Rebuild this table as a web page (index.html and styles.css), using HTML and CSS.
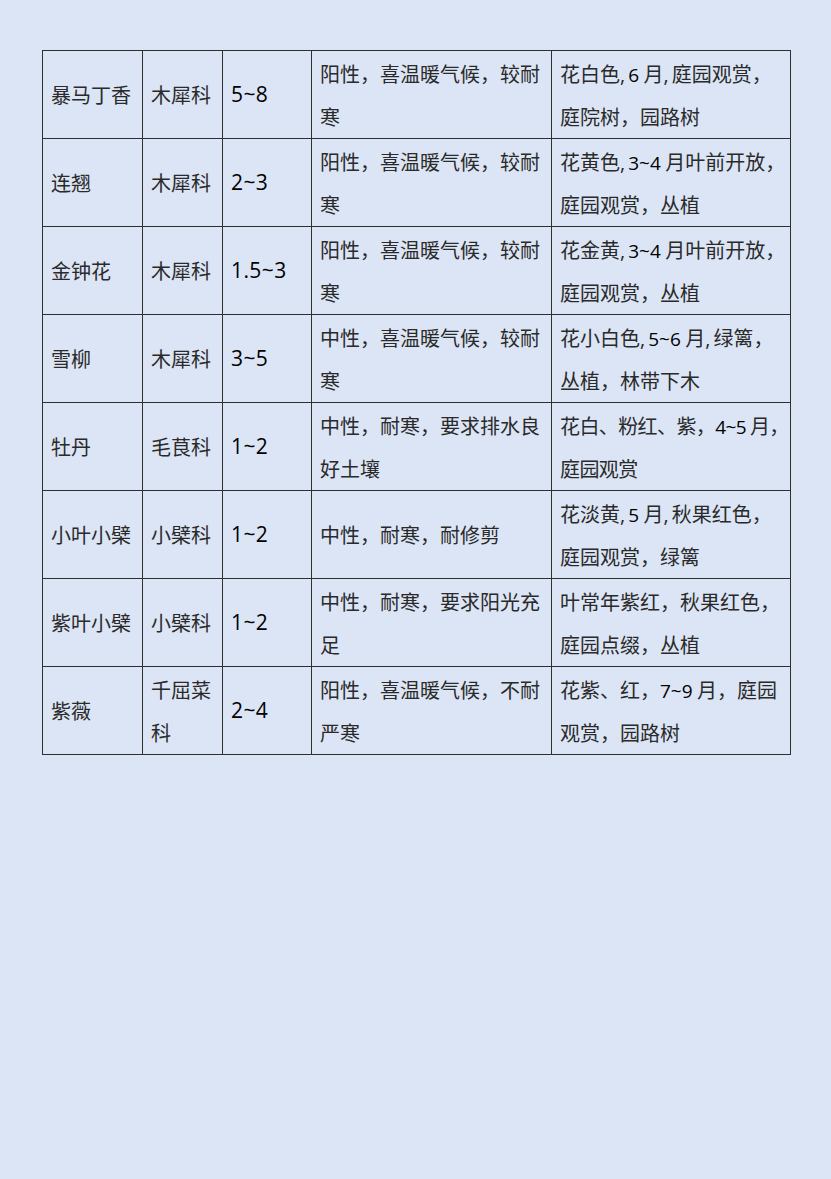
FILE: index.html
```html
<!DOCTYPE html>
<html lang="zh">
<head>
<meta charset="utf-8">
<link rel="stylesheet" href="styles.css">
</head>
<body>
<table class="plants">
  <colgroup>
    <col class="c1"><col class="c2"><col class="c3"><col class="c4"><col class="c5">
  </colgroup>
  <tr><td>暴马丁香</td><td>木犀科</td><td class="num">5~8</td><td>阳性，喜温暖气候，较耐<br>寒</td><td>花白色<span class="hc">,</span><span class="n">6</span> 月<span class="hc">,</span>庭园观赏，<br>庭院树，园路树</td></tr>
  <tr><td>连翘</td><td>木犀科</td><td class="num">2~3</td><td>阳性，喜温暖气候，较耐<br>寒</td><td>花黄色<span class="hc">,</span><span class="n">3~4</span> 月叶前开放，<br>庭园观赏，丛植</td></tr>
  <tr><td>金钟花</td><td>木犀科</td><td class="num">1.5~3</td><td>阳性，喜温暖气候，较耐<br>寒</td><td>花金黄<span class="hc">,</span><span class="n">3~4</span> 月叶前开放，<br>庭园观赏，丛植</td></tr>
  <tr><td>雪柳</td><td>木犀科</td><td class="num">3~5</td><td>中性，喜温暖气候，较耐<br>寒</td><td>花小白色<span class="hc">,</span><span class="n">5~6</span> 月<span class="hc">,</span>绿篱，<br>丛植，林带下木</td></tr>
  <tr><td>牡丹</td><td>毛茛科</td><td class="num">1~2</td><td>中性，耐寒，要求排水良<br>好土壤</td><td class="tight">花白、粉红、紫，<span class="n">4~5</span> 月，<br>庭园观赏</td></tr>
  <tr><td>小叶小檗</td><td>小檗科</td><td class="num">1~2</td><td>中性，耐寒，耐修剪</td><td>花淡黄<span class="hc">,</span><span class="n">5</span> 月<span class="hc">,</span>秋果红色，<br>庭园观赏，绿篱</td></tr>
  <tr><td>紫叶小檗</td><td>小檗科</td><td class="num">1~2</td><td>中性，耐寒，要求阳光充<br>足</td><td>叶常年紫红，秋果红色，<br>庭园点缀，丛植</td></tr>
  <tr><td>紫薇</td><td>千屈菜<br>科</td><td class="num">2~4</td><td>阳性，喜温暖气候，不耐<br>严寒</td><td>花紫、红，<span class="n">7~9</span> 月，庭园<br>观赏，园路树</td></tr>
</table>
</body>
</html>
```
FILE: styles.css
```css
html, body {
  margin: 0;
  padding: 0;
  background: #dce5f5;
}
body {
  padding: 50px 0 0 42px;
  height: 1179px;
  box-sizing: border-box;
  font-family: "Noto Sans CJK SC", sans-serif;
  color: #2a2a2a;
}
.plants {
  border-collapse: collapse;
  table-layout: fixed;
  width: 748px;
}
.c1 { width: 100px; }
.c2 { width: 80px; }
.c3 { width: 89px; }
.c4 { width: 240px; }
.c5 { width: 239px; }
.plants td {
  border: 1px solid #2f2f2f;
  height: 87px;
  padding: 0 0 0 8px;
  font-size: 20px;
  line-height: 43px;
  vertical-align: middle;
  white-space: nowrap;
  overflow: hidden;
  font-weight: 400;
}
.plants td.tight {
  letter-spacing: -0.6px;
}
.plants td.num {
  font-family: "Open Sans", "Noto Sans", sans-serif;
  font-size: 21px;
  color: #000;
  letter-spacing: 0.4px;
}
.n {
  font-family: "Open Sans", "Noto Sans", sans-serif;
  font-size: 19px;
  line-height: 1;
  color: #000;
}
.hc {
  font-family: "Open Sans", sans-serif;
  line-height: 1;
  padding-right: 3px;
}
```
